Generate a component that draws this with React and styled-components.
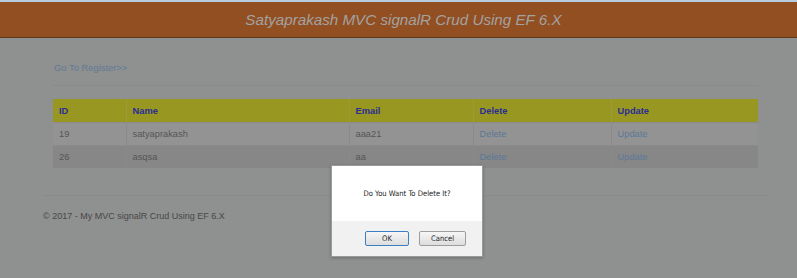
import React from "react";
import styled, { createGlobalStyle } from "styled-components";

const GlobalStyle = createGlobalStyle`
  html, body {
    margin: 0;
    padding: 0;
    background: #8f9090;
    font-family: "Liberation Sans", Arial, sans-serif;
  }
  body {
    height: 278px;
    overflow: hidden;
    position: relative;
  }
`;

const Header = styled.div`
  height: 35px;
  border-top: 2px solid #b9cde0;
  border-bottom: 1px solid #5e3a1c;
  background: #924f22;
  display: flex;
  align-items: center;
  justify-content: center;
`;

const Title = styled.h1`
  margin: 0;
  padding-left: 10px;
  font-size: 15.2px;
  font-weight: normal;
  font-style: italic;
  color: #a2a2a2;
`;

const Body = styled.div`
  padding: 0 29px 0 43px;
`;

const Content = styled.div`
  padding: 23px 10px 0 10px;
`;

const RegisterLink = styled.a`
  display: block;
  font-size: 9.4px;
  color: #5f7a95;
  text-decoration: none;
  line-height: 14px;
  margin-left: 1px;
`;

const Rule = styled.hr`
  border: 0;
  border-top: 1px solid #898a8a;
  margin: ${(p) => p.$margin};
`;

const Table = styled.table`
  width: 100%;
  border-collapse: collapse;
  font-size: 9.3px;
`;

const HeadCell = styled.th`
  background: #979721;
  color: #2c2c96;
  font-weight: bold;
  text-align: left;
  height: 23px;
  padding: 0 6px;
  border-left: 1px solid #9c9b3a;
  &:first-child { border-left: 0; }
`;

const Row = styled.tr`
  background: ${(p) => (p.$alt ? "#878787" : "#939393")};
`;

const Cell = styled.td`
  height: 22px;
  padding: 0 6px;
  color: ${(p) => (p.$link ? "#5b7897" : "#555555")};
  border-left: 1px solid #8a8a8a;
  border-top: 1px solid #8a8a8a;
  &:first-child { border-left: 0; }
`;

const Footer = styled.footer`
  font-size: 9px;
  color: #484848;
  line-height: 14px;
`;

const Dialog = styled.div`
  position: absolute;
  left: 331px;
  top: 165px;
  width: 150px;
  background: #ffffff;
  border: 1px solid #9a9a9a;
  box-shadow: 0 1px 3px rgba(0, 0, 0, 0.25);
  font-family: "DejaVu Sans Condensed", "Liberation Sans", sans-serif;
`;

const Message = styled.div`
  height: 55px;
  display: flex;
  align-items: center;
  justify-content: center;
  font-size: 7.6px;
  color: #222222;
`;

const DialogFooter = styled.div`
  height: 35px;
  background: #f1f1f1;
  display: flex;
  align-items: center;
  justify-content: flex-end;
  gap: 10px;
  padding-right: 16px;
`;

const Button = styled.button`
  width: ${(p) => p.$w}px;
  height: 15px;
  padding: 0;
  font-family: inherit;
  font-size: 7.6px;
  color: #222222;
  border-radius: 2px;
  border: 1px solid ${(p) => (p.$focus ? "#3a7fc4" : "#9d9d9d")};
  background: linear-gradient(#f6f6f6, #dddddd);
`;

const columns = [
  { key: "ID", w: 73 },
  { key: "Name", w: 223 },
  { key: "Email", w: 124 },
  { key: "Delete", w: 138 },
  { key: "Update", w: 147 },
];

const rows = [
  { id: 19, name: "satyaprakash", email: "aaa21" },
  { id: 26, name: "asqsa", email: "aa" },
];

export default function App() {
  return (
    <>
      <GlobalStyle />
      <Header>
        <Title>Satyaprakash MVC signalR Crud Using EF 6.X</Title>
      </Header>
      <Body>
        <Content>
          <RegisterLink href="#">Go To Register&gt;&gt;</RegisterLink>
          <Rule $margin="10px 0 13px 0" />
          <Table>
            <colgroup>
              {columns.map((c) => (
                <col key={c.key} style={{ width: c.w }} />
              ))}
            </colgroup>
            <thead>
              <tr>
                {columns.map((c) => (
                  <HeadCell key={c.key}>{c.key}</HeadCell>
                ))}
              </tr>
            </thead>
            <tbody>
              {rows.map((r, i) => (
                <Row key={r.id} $alt={i % 2 === 1}>
                  <Cell>{r.id}</Cell>
                  <Cell>{r.name}</Cell>
                  <Cell>{r.email}</Cell>
                  <Cell $link>Delete</Cell>
                  <Cell $link>Update</Cell>
                </Row>
              ))}
            </tbody>
          </Table>
        </Content>
        <Rule $margin="27px 0 13px 0" />
        <Footer>© 2017 - My MVC signalR Crud Using EF 6.X</Footer>
      </Body>
      <Dialog>
        <Message>Do You Want To Delete It?</Message>
        <DialogFooter>
          <Button $w={44} $focus>OK</Button>
          <Button $w={47}>Cancel</Button>
        </DialogFooter>
      </Dialog>
    </>
  );
}
